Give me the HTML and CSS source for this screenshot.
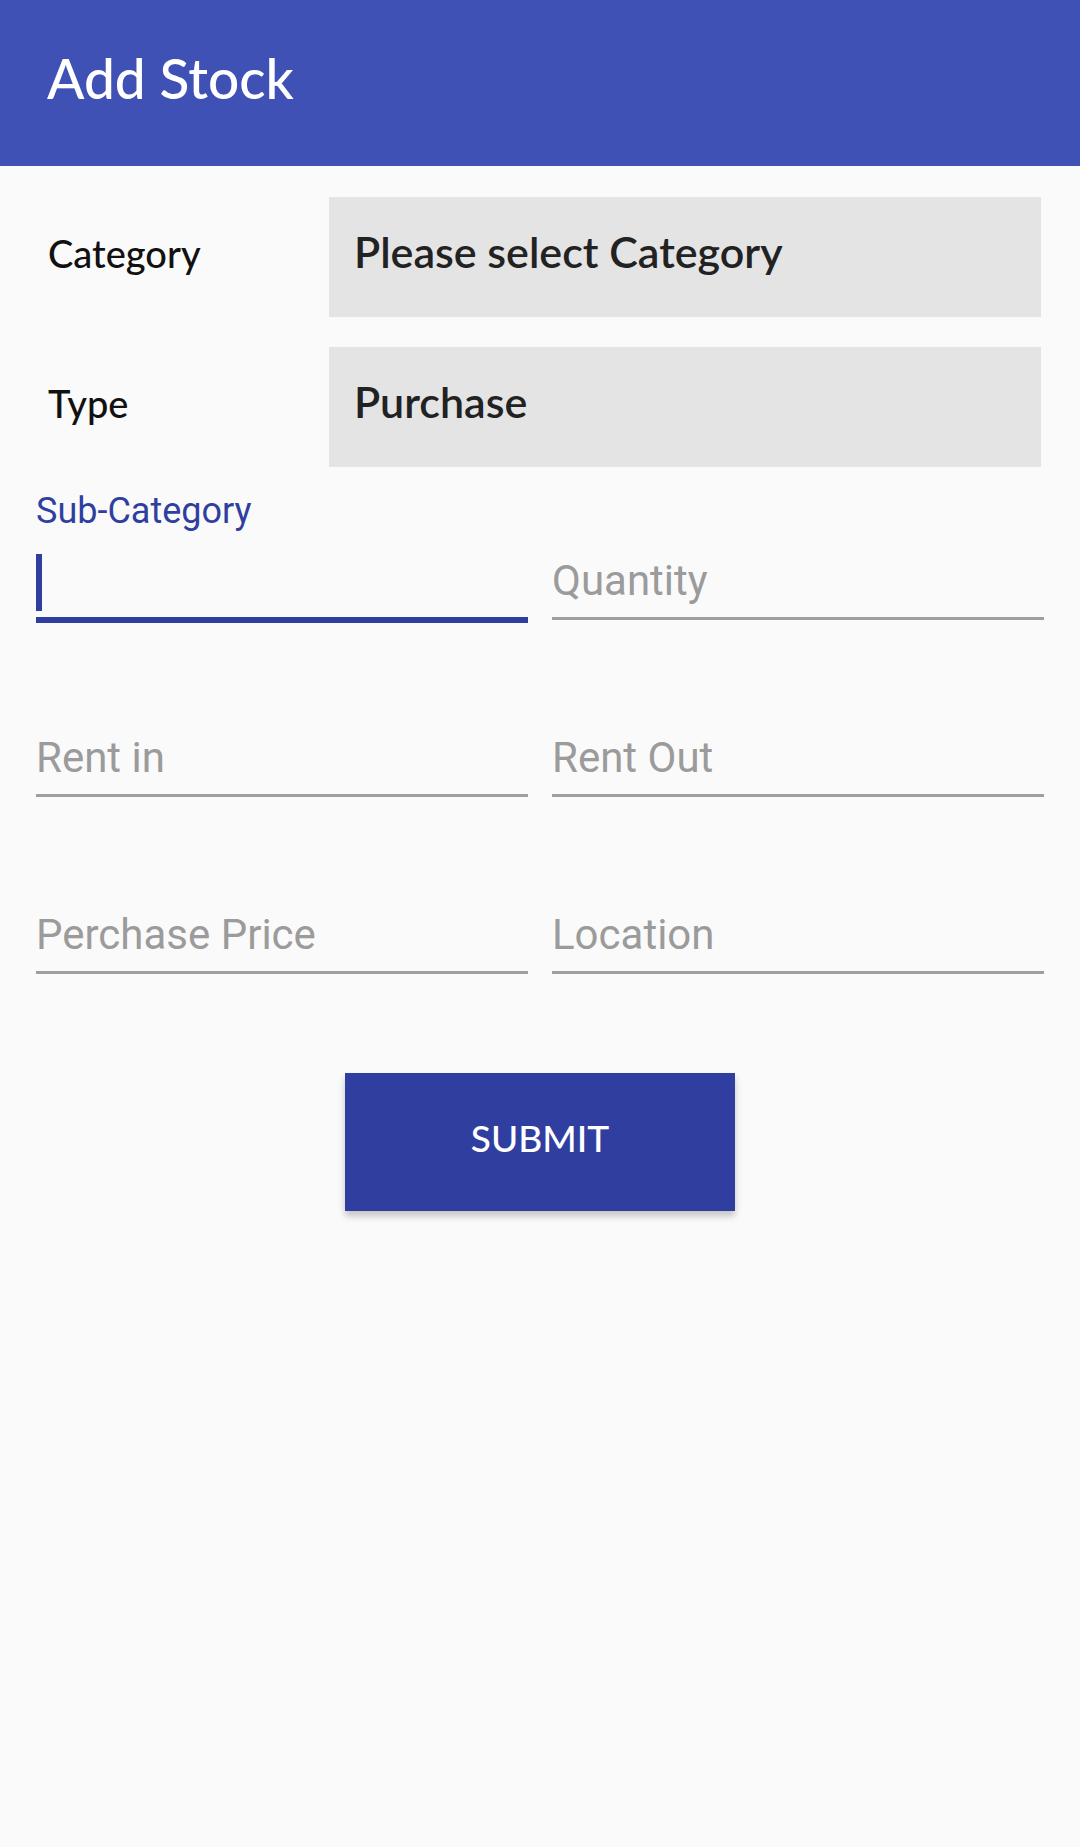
FILE: index.html
```html
<!DOCTYPE html>
<html lang="en">
<head>
    <meta charset="UTF-8">
    <meta name="viewport" content="width=device-width, initial-scale=1.0">
    <title>Add Stock</title>
    <link rel="stylesheet" href="styles.css">
</head>
<body>
    <div class="app-bar">
        <p class="app-title">Add Stock</p>
    </div>
    <div class="form">
        <div class="select-row">
            <p class="select-label">Category</p>
            <div class="select-box">Please select Category</div>
        </div>
        <div class="select-row">
            <p class="select-label">Type</p>
            <div class="select-box">Purchase</div>
        </div>
        <div class="fields">
            <div class="field focused">
                <span class="float-label">Sub-Category</span>
                <span class="cursor"></span>
            </div>
            <div class="field">
                <span class="hint">Quantity</span>
            </div>
            <div class="field">
                <span class="hint">Rent in</span>
            </div>
            <div class="field">
                <span class="hint">Rent Out</span>
            </div>
            <div class="field">
                <span class="hint">Perchase Price</span>
            </div>
            <div class="field">
                <span class="hint">Location</span>
            </div>
        </div>
        <div class="actions">
            <button class="submit-btn">SUBMIT</button>
        </div>
    </div>
</body>
</html>
```

FILE: styles.css
```css
html, body {
    margin: 0;
    padding: 0;
    width: 100%;
    height: 100%;
    background: #fafafa;
    font-family: "Lato", "Open Sans", sans-serif;
}
p {
    margin: 0;
}
.app-bar {
    height: 166px;
    box-sizing: border-box;
    padding: 45px 0 0 47px;
    background: #3f51b5;
}
.app-title {
    color: #fff;
    font-size: 55px;
    font-weight: 500;
    line-height: 1.2;
}
.form {
    padding: 31px 36px 0 36px;
}
.select-row {
    display: flex;
    align-items: baseline;
    padding: 0 3px 0 12px;
    margin-bottom: 30px;
}
.select-label {
    width: 281px;
    flex-shrink: 0;
    font-size: 38px;
    font-weight: 500;
    line-height: 1.2;
    color: #111;
}
.select-box {
    flex: 1;
    height: 120px;
    box-sizing: border-box;
    padding: 29px 26px 0 25px;
    background: #e4e4e4;
    font-size: 43px;
    font-weight: 600;
    line-height: 1.2;
    color: #222;
}
.fields {
    display: grid;
    grid-template-columns: 1fr 1fr;
    grid-auto-rows: 126px;
    column-gap: 24px;
    row-gap: 51px;
    align-items: start;
    font-family: "Roboto", sans-serif;
}
.field {
    height: 108px;
    display: flex;
    flex-direction: column;
    justify-content: flex-end;
    padding-bottom: 12px;
    border-bottom: 3px solid #9e9e9e;
}
.field .hint {
    font-size: 42px;
    line-height: 48px;
    color: #9b9b9b;
}
.field.focused {
    justify-content: flex-start;
    height: 114px;
    padding-bottom: 6px;
    border-bottom: 6px solid #303f9f;
}
.float-label {
    font-size: 36px;
    line-height: 28px;
    color: #303f9f;
}
.cursor {
    display: block;
    width: 6px;
    height: 57px;
    margin-top: 29px;
    background: #303f9f;
}
.actions {
    display: flex;
    justify-content: center;
    margin-top: 96px;
}
.submit-btn {
    width: 390px;
    height: 138px;
    border: none;
    border-radius: 0;
    padding: 0 0 10px 0;
    background: #303f9f;
    color: #fff;
    font-family: "Lato", sans-serif;
    font-size: 37px;
    font-weight: 500;
    box-shadow: 0 5px 7px rgba(0, 0, 0, 0.22);
}
```
